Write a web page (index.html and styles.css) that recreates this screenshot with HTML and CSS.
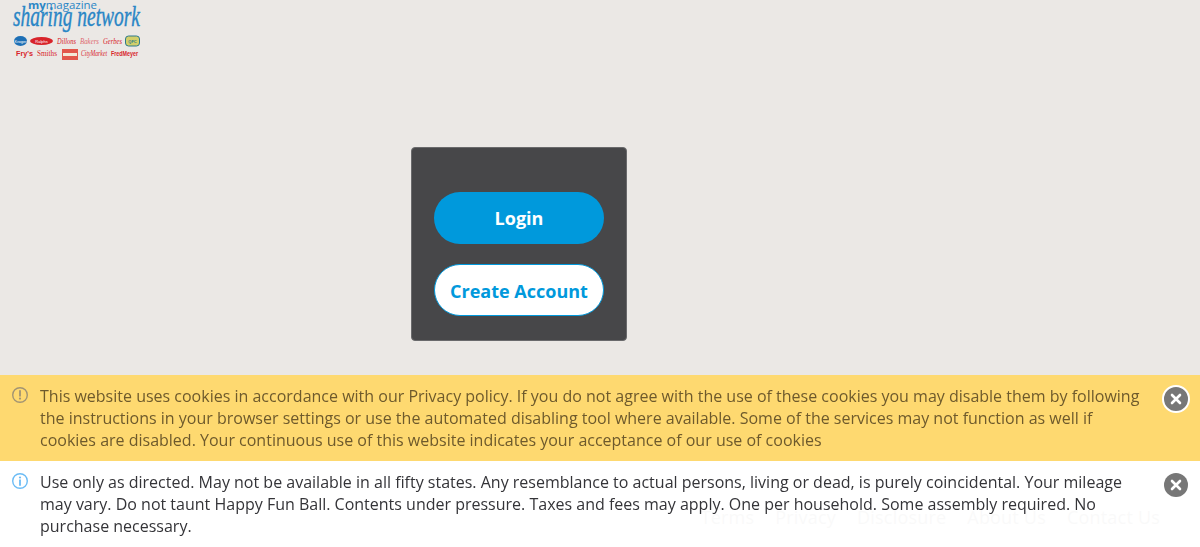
FILE: index.html
```html
<!DOCTYPE html>
<html lang="en">
<head>
<meta charset="utf-8">
<title>My Magazine Sharing Network</title>
<link rel="stylesheet" href="styles.css">
</head>
<body>
<div class="page">
  <header class="header">
    <svg class="logo" width="150" height="64" viewBox="0 0 150 64" role="img" aria-label="mymagazine sharing network">
      <text x="28" y="8.500" class="lg-my" textLength="69" lengthAdjust="spacingAndGlyphs">my<tspan class="lg-mag">magazine</tspan></text>
      <text x="13" y="26" class="lg-sharing" textLength="127" lengthAdjust="spacingAndGlyphs">sharing network</text>
      <ellipse cx="20.500" cy="41" rx="6.500" ry="5" fill="#1d6fb5"/>
      <text x="20.500" y="42.500" class="lg-t lg-w">Kroger</text>
      <ellipse cx="41.500" cy="41" rx="11.500" ry="4" fill="#d8232a"/>
      <text x="41.500" y="42.500" class="lg-t lg-w">Ralphs</text>
      <text x="57" y="44" class="lg-s lg-red" textLength="19" lengthAdjust="spacingAndGlyphs">Dillons</text>
      <text x="80" y="44" class="lg-s lg-pink" textLength="19" lengthAdjust="spacingAndGlyphs">Bakers</text>
      <text x="103" y="44" class="lg-s lg-red" textLength="19" lengthAdjust="spacingAndGlyphs">Gerbes</text>
      <rect x="125.500" y="36" width="14" height="10" rx="3" fill="#d3cf6a" stroke="#2c7a8c"/>
      <text x="132.500" y="43" class="lg-t lg-q">QFC</text>
      <text x="16" y="56" class="lg-b lg-red" textLength="17" lengthAdjust="spacingAndGlyphs">Fry's</text>
      <text x="37" y="56" class="lg-s2 lg-red" textLength="20" lengthAdjust="spacingAndGlyphs">Smiths</text>
      <rect x="62" y="49" width="16" height="11" fill="#e2574c"/>
      <rect x="63" y="53" width="14" height="3" fill="#f3e9d8"/>
      <text x="81" y="56" class="lg-s lg-red" textLength="26" lengthAdjust="spacingAndGlyphs">CityMarket</text>
      <text x="111" y="56" class="lg-b lg-red" textLength="27" lengthAdjust="spacingAndGlyphs">FredMeyer</text>
    </svg>
  </header>
  <main class="main">
    <div class="card">
      <a class="btn btn-primary" href="#">Login</a>
      <a class="btn btn-secondary" href="#">Create Account</a>
    </div>
  </main>
  <footer class="footer">
    <a href="#">Terms</a><a href="#">Privacy</a><a href="#">Disclosure</a><a href="#">About Us</a><a href="#">Contact Us</a>
  </footer>
</div>
<div class="alerts">
  <div class="alert alert-warning">
    <svg class="alert-icon" width="16" height="16" viewBox="0 0 16 16"><circle cx="8" cy="8" r="7.300" fill="none" stroke="currentColor" stroke-width="1.400"/><path d="M8 3.800v5" stroke="currentColor" stroke-width="1.800" stroke-linecap="round"/><circle cx="8" cy="11.600" r="1.100" fill="currentColor"/></svg>
    <p class="alert-text">This website uses cookies in accordance with our Privacy policy. If you do not agree with the use of these cookies you may disable them by following the instructions in your browser settings or use the automated disabling tool where available. Some of the services may not function as well if cookies are disabled. Your continuous use of this website indicates your acceptance of our use of cookies</p>
    <button class="close close-ring" aria-label="Close"><svg width="24" height="24" viewBox="0 0 24 24"><path d="M8 8l8 8M16 8l-8 8" stroke="#fff" stroke-width="2.600" stroke-linecap="round"/></svg></button>
  </div>
  <div class="alert alert-info">
    <svg class="alert-icon" width="16" height="16" viewBox="0 0 16 16"><circle cx="8" cy="8" r="7.300" fill="none" stroke="currentColor" stroke-width="1.400"/><path d="M8 7.200v4.800" stroke="currentColor" stroke-width="1.800" stroke-linecap="round"/><circle cx="8" cy="4.500" r="1.100" fill="currentColor"/></svg>
    <p class="alert-text">Use only as directed. May not be available in all fifty states. Any resemblance to actual persons, living or dead, is purely coincidental. Your mileage may vary. Do not taunt Happy Fun Ball. Contents under pressure. Taxes and fees may apply. One per household. Some assembly required. No purchase necessary.</p>
    <button class="close" aria-label="Close"><svg width="24" height="24" viewBox="0 0 24 24"><path d="M8 8l8 8M16 8l-8 8" stroke="#fff" stroke-width="2.600" stroke-linecap="round"/></svg></button>
  </div>
</div>
</body>
</html>
```
FILE: styles.css
```css
* { box-sizing: border-box; }
html, body { margin: 0; height: 100%; }
body {
  background: #ebe8e5;
  font-family: "Open Sans", "Liberation Sans", sans-serif;
  color: #3c3c3e;
  overflow: hidden;
}
.page { display: flex; flex-direction: column; height: 547px; }
.header { height: 147px; }
.logo { display: block; }
.lg-my { font: 700 11px "Open Sans", sans-serif; fill: #2a86c6; }
.lg-mag { font-weight: 400; }
.lg-sharing { font: italic 400 29px "Liberation Serif", serif; fill: #2a86c6; stroke: #2a86c6; stroke-width: 0.4px; }
.lg-t { font-family: "Liberation Sans", sans-serif; font-size: 4px; text-anchor: middle; }
.lg-w { fill: #fff; }
.lg-q { fill: #2c7a8c; font-weight: 700; }
.lg-s { font-family: "Liberation Serif", serif; font-style: italic; font-size: 8px; }
.lg-s2 { font-family: "Liberation Serif", serif; font-size: 8px; }
.lg-b { font-family: "Liberation Sans", sans-serif; font-weight: 700; font-size: 7px; }
.lg-red { fill: #d8232a; }
.lg-pink { fill: #df6a70; }
.main { flex: 1; padding-left: 411px; }
.card {
  width: 216px;
  height: 194px;
  padding: 44px 22px 0;
  background: #474749;
  border: 1px solid #6a6a6c;
  border-radius: 4px;
  display: flex;
  flex-direction: column;
  gap: 20px;
}
.btn {
  display: flex;
  align-items: center;
  justify-content: center;
  width: 170px;
  height: 52px;
  border-radius: 26px;
  font-size: 18px;
  font-weight: 700;
  text-decoration: none;
}
.btn-primary { background: #0099dc; color: #fff; }
.btn-secondary { background: #fff; color: #0099dc; border: 1px solid #0099dc; padding-top: 2px; }
.footer {
  display: flex;
  justify-content: flex-end;
  gap: 21px;
  padding: 0 40px 18px 0;
  font-size: 18px;
  line-height: 24px;
  letter-spacing: 0.2px;
}
.footer a { color: #474749; text-decoration: none; }
.alerts { position: fixed; left: 0; right: 0; bottom: 0; display: flex; flex-direction: column; }
.alert {
  display: flex;
  align-items: flex-start;
  height: 86px;
  padding: 10px 12px 0 12px;
  font-size: 16px;
  line-height: 22px;
}
.alert-warning { background: #fed970; color: #6e5a2c; }
.alert-info { background: rgba(255, 255, 255, 0.97); color: #343438; }
.alert-icon { flex: none; margin: 2px 12px 0 0; }
.alert-warning .alert-icon { color: #a29473; }
.alert-info .alert-icon { color: #6cbcf5; }
.alert-text { flex: 1; margin: 0; }
.close {
  flex: none;
  width: 24px;
  height: 24px;
  padding: 0;
  margin: 0 0 0 20px;
  border: 0;
  border-radius: 50%;
  background: #777;
  box-sizing: content-box;
  position: relative;
  top: 2px;
}
.close svg { display: block; }
.close-ring { border: 2px solid #fff; margin: 0 -2px 0 18px; top: 0; }
```
